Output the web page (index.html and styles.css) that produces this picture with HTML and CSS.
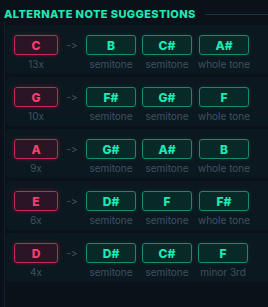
FILE: index.html
```html
<!DOCTYPE html>
<html lang="en">
<head>
    <meta charset="UTF-8">
    <meta name="viewport" content="width=device-width, initial-scale=1.0">
    <title>Alternate Note Suggestions</title>
    <link rel="stylesheet" href="styles.css">
</head>
<body>
    <div class="panel">
        <div class="panel-header">
            <h2>ALTERNATE NOTE SUGGESTIONS</h2>
            <div class="header-line"></div>
        </div>

        <div class="list">
            <div class="card">
                <div class="note-col">
                    <div class="note orig">C</div>
                    <div class="caption">13x</div>
                </div>
                <div class="arrow">-&gt;</div>
                <div class="note-col">
                    <div class="note alt">B</div>
                    <div class="caption">semitone</div>
                </div>
                <div class="note-col">
                    <div class="note alt">C#</div>
                    <div class="caption">semitone</div>
                </div>
                <div class="note-col">
                    <div class="note alt">A#</div>
                    <div class="caption">whole tone</div>
                </div>
            </div>

            <div class="card">
                <div class="note-col">
                    <div class="note orig">G</div>
                    <div class="caption">10x</div>
                </div>
                <div class="arrow">-&gt;</div>
                <div class="note-col">
                    <div class="note alt">F#</div>
                    <div class="caption">semitone</div>
                </div>
                <div class="note-col">
                    <div class="note alt">G#</div>
                    <div class="caption">semitone</div>
                </div>
                <div class="note-col">
                    <div class="note alt">F</div>
                    <div class="caption">whole tone</div>
                </div>
            </div>

            <div class="card">
                <div class="note-col">
                    <div class="note orig">A</div>
                    <div class="caption">9x</div>
                </div>
                <div class="arrow">-&gt;</div>
                <div class="note-col">
                    <div class="note alt">G#</div>
                    <div class="caption">semitone</div>
                </div>
                <div class="note-col">
                    <div class="note alt">A#</div>
                    <div class="caption">semitone</div>
                </div>
                <div class="note-col">
                    <div class="note alt">B</div>
                    <div class="caption">whole tone</div>
                </div>
            </div>

            <div class="card">
                <div class="note-col">
                    <div class="note orig">E</div>
                    <div class="caption">6x</div>
                </div>
                <div class="arrow">-&gt;</div>
                <div class="note-col">
                    <div class="note alt">D#</div>
                    <div class="caption">semitone</div>
                </div>
                <div class="note-col">
                    <div class="note alt">F</div>
                    <div class="caption">semitone</div>
                </div>
                <div class="note-col">
                    <div class="note alt">F#</div>
                    <div class="caption">whole tone</div>
                </div>
            </div>

            <div class="card">
                <div class="note-col">
                    <div class="note orig">D</div>
                    <div class="caption">4x</div>
                </div>
                <div class="arrow">-&gt;</div>
                <div class="note-col">
                    <div class="note alt">D#</div>
                    <div class="caption">semitone</div>
                </div>
                <div class="note-col">
                    <div class="note alt">C#</div>
                    <div class="caption">semitone</div>
                </div>
                <div class="note-col">
                    <div class="note alt">F</div>
                    <div class="caption">minor 3rd</div>
                </div>
            </div>
        </div>
    </div>
</body>
</html>
```

FILE: styles.css
```css
body {
    margin: 0;
    background-color: #0a1118;
    font-family: Inter, "Liberation Sans", sans-serif;
    font-feature-settings: "calt" 0, "liga" 0;
    overflow: hidden;
    height: 307px;
}
.panel {
    padding: 6px 0 0 4px;
}
.panel-header {
    display: flex;
    align-items: center;
    gap: 9px;
    height: 16px;
}
.panel-header h2 {
    margin: 0;
    font-size: 11px;
    font-weight: 800;
    letter-spacing: 0.4px;
    color: #1de9b6;
    white-space: nowrap;
}
.header-line {
    flex: 1;
    height: 1px;
    background-color: #17383a;
}
.list {
    padding-top: 3px;
    border-left: 1px solid #142128;
    height: 290px;
    display: flex;
    flex-direction: column;
    gap: 3px;
}
.card {
    margin-left: 1px;
    height: 49px;
    box-sizing: border-box;
    padding: 10px 8px 0;
    background-color: #0c1820;
    border-radius: 4px 0 0 4px;
    display: flex;
    align-items: flex-start;
    gap: 6px;
}
.note-col {
    display: flex;
    flex-direction: column;
    align-items: center;
}
.note {
    box-sizing: border-box;
    height: 20px;
    width: 50px;
    border-radius: 3px;
    display: flex;
    align-items: center;
    justify-content: center;
    font-size: 12px;
    font-weight: 800;
}
.note.orig {
    width: 44px;
    color: #ff3d6e;
    background-color: #2b1424;
    border: 1px solid #c42a52;
    box-shadow: 0 0 5px rgba(220, 40, 80, 0.3);
}
.note.alt {
    color: #1de9b6;
    background-color: #082a27;
    border: 1px solid #198a6c;
    box-shadow: 0 0 4px rgba(29, 233, 182, 0.12);
}
.caption {
    margin-top: 3px;
    font-size: 10px;
    color: #3c5260;
    white-space: nowrap;
}
.arrow {
    width: 16px;
    height: 20px;
    display: flex;
    align-items: center;
    justify-content: center;
    font-size: 10px;
    color: #44565f;
}
```
